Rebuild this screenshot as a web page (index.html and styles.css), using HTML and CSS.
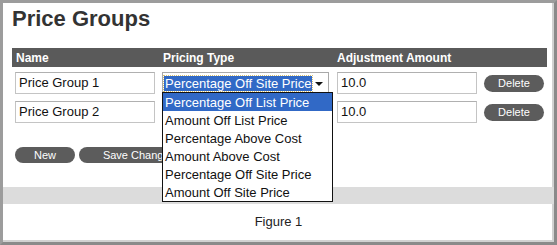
FILE: index.html
```html
<!DOCTYPE html>
<html lang="en">
<head>
  <meta charset="UTF-8">
  <title>Price Groups</title>
  <link rel="stylesheet" href="styles.css">
</head>
<body>
  <div class="frame">
    <h1 class="title">Price Groups</h1>

    <div class="groups">
      <div class="head">
        <div class="col-name">Name</div>
        <div class="col-type">Pricing Type</div>
        <div class="col-amount">Adjustment Amount</div>
        <div></div>
      </div>

      <div class="row">
        <div class="col-name"><div class="field">Price Group 1</div></div>
        <div class="col-type">
          <div class="select-wrap">
            <div class="select">
              <span class="chosen">Percentage Off Site Price</span>
              <span class="arrow"></span>
            </div>
            <ul class="options">
              <li class="active">Percentage Off List Price</li>
              <li>Amount Off List Price</li>
              <li>Percentage Above Cost</li>
              <li>Amount Above Cost</li>
              <li>Percentage Off Site Price</li>
              <li>Amount Off Site Price</li>
            </ul>
          </div>
        </div>
        <div class="col-amount"><div class="field">10.0</div></div>
        <div><button class="pill delete">Delete</button></div>
      </div>

      <div class="row">
        <div class="col-name"><div class="field">Price Group 2</div></div>
        <div class="col-type"></div>
        <div class="col-amount"><div class="field">10.0</div></div>
        <div><button class="pill delete">Delete</button></div>
      </div>
    </div>

    <div class="actions">
      <button class="pill new">New</button>
      <button class="pill save">Save Changes</button>
    </div>

    <div class="bar"></div>
    <div class="caption">Figure 1</div>
  </div>
</body>
</html>
```

FILE: styles.css
```css
body {
  margin: 0;
  font-family: "Liberation Sans", Arial, sans-serif;
  background: white;
}
.frame {
  width: 557px;
  height: 245px;
  box-sizing: border-box;
  border: 3px solid #9c9c9c;
  border-right-color: #8a8a8a;
  border-bottom-color: #8a8a8a;
  box-shadow: inset -2px -2px 0 #d2d2d2;
  background: white;
  overflow: hidden;
}
.title {
  margin: 3px 0 0 9px;
  font-size: 22px;
  line-height: 26px;
  font-weight: bold;
  color: #333;
}
.groups {
  margin: 16px 7px 0 9px;
}
.head, .row {
  display: grid;
  grid-template-columns: 150px 175px 147px 63px;
}
.head {
  height: 19px;
  box-sizing: border-box;
  padding-top: 2px;
  background: #5a5a5a;
  color: white;
  font-size: 12px;
  line-height: 17px;
  font-weight: bold;
}
.head .col-name {
  padding-left: 4px;
}
.head .col-type {
  padding-left: 1px;
}
.row {
  height: 22px;
  margin-top: 5px;
  align-items: center;
}
.row + .row {
  margin-top: 7px;
}
.field {
  width: 140px;
  height: 22px;
  box-sizing: border-box;
  border: 1px solid #c4c4c4;
  border-top-color: #b0b0b0;
  padding-left: 3px;
  font-size: 13px;
  line-height: 20px;
  color: #111;
}
.row .col-name .field {
  margin-left: 3px;
}
.select-wrap {
  position: relative;
}
.select {
  width: 167px;
  height: 22px;
  box-sizing: border-box;
  border: 1px solid #a9a9a9;
  display: flex;
  align-items: center;
  padding: 0 2px 0 1px;
}
.chosen {
  flex: 1;
  background: #3169c6;
  color: white;
  font-size: 13px;
  line-height: 15px;
  padding-left: 1px;
  outline: 1px dotted #d8c070;
}
.arrow {
  width: 14px;
  height: 16px;
  display: flex;
  align-items: center;
  justify-content: center;
}
.arrow::after {
  content: "";
  border-left: 4px solid transparent;
  border-right: 4px solid transparent;
  border-top: 4px solid #111;
  margin-top: 2px;
}
.options {
  position: absolute;
  top: 20px;
  left: 0;
  width: 171px;
  box-sizing: border-box;
  margin: 0;
  padding: 0;
  list-style: none;
  border: 1px solid #111;
  background: white;
  z-index: 2;
}
.options li {
  height: 18px;
  padding: 1px 0 0 2px;
  box-sizing: border-box;
  font-size: 13px;
  line-height: 17px;
  color: #111;
}
.options .active {
  background: #3169c6;
  color: white;
}
.pill {
  border: none;
  background: #5c5c5c;
  color: white;
  font-family: "Liberation Sans", Arial, sans-serif;
  font-size: 11px;
  line-height: 16px;
  height: 16px;
  padding: 0;
  border-radius: 9px;
  display: block;
}
.delete {
  width: 60px;
  height: 17px;
}
.actions {
  display: flex;
  gap: 4px;
  margin: 24px 0 0 12px;
}
.new {
  width: 60px;
}
.save {
  width: 120px;
}
.bar {
  height: 17px;
  margin-top: 24px;
  background: #dcdcdc;
}
.caption {
  margin-top: 10px;
  text-align: center;
  font-size: 13px;
  line-height: 16px;
  color: #222;
}
```
